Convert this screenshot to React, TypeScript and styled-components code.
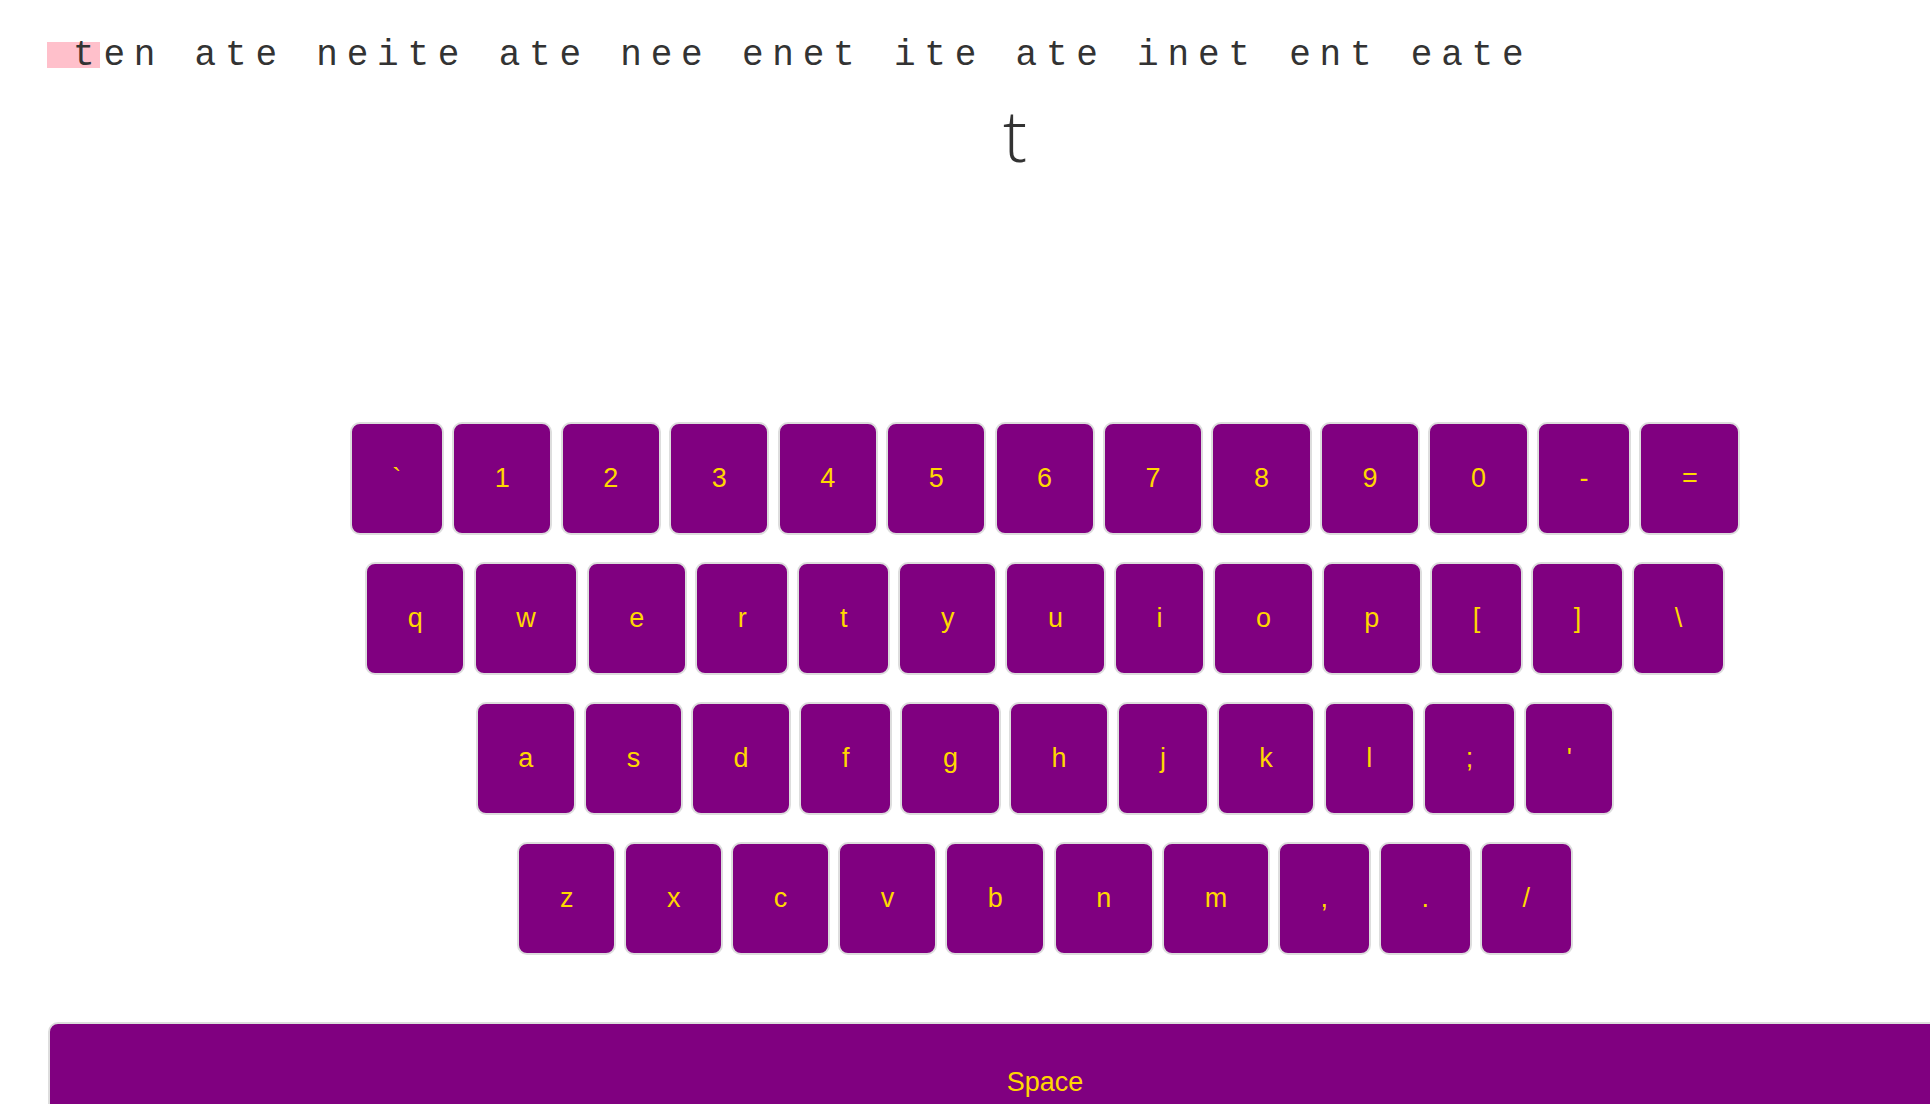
import React from "react";
import styled, { createGlobalStyle } from "styled-components";

const GlobalStyle = createGlobalStyle`
  html, body {
    margin: 0;
    padding: 0;
    overflow: hidden;
    background: #ffffff;
  }
  body {
    font-family: "Liberation Sans", Arial, sans-serif;
  }
`;

const Page = styled.div`
  box-sizing: content-box;
  width: 1994px;
  padding: 36px 0 0 48px;
`;

const TextLine = styled.div`
  position: relative;
  margin-left: 25px;
  font-family: "Liberation Mono", "Courier New", monospace;
  font-size: 36px;
  line-height: 40px;
  letter-spacing: 8.8px;
  color: #333333;
  white-space: pre;
`;

const Cursor = styled.span`
  position: absolute;
  left: -26px;
  top: 6px;
  width: 53px;
  height: 26px;
  background: pink;
`;

const Words = styled.span`
  position: relative;
`;

const BigLetter = styled.div`
  margin-top: 22px;
  padding-right: 60px;
  text-align: center;
  font-family: "Open Sans", "Noto Sans", sans-serif;
  font-weight: 300;
  font-size: 72px;
  line-height: 72px;
  color: #333333;
`;

const Keyboard = styled.div`
  margin-top: 252px;
  display: flex;
  flex-direction: column;
  gap: 27px;
`;

const Row = styled.div`
  display: flex;
  justify-content: center;
  gap: 8.25px;
`;

const Key = styled.div`
  box-sizing: content-box;
  padding: 39px 40.6px;
  border: 2px solid #dddddd;
  border-radius: 10px;
  background: #800080;
  color: #ffd700;
  font-size: 27px;
  line-height: 31px;
  text-align: center;
  white-space: pre;
`;

const SpaceBar = styled.div`
  margin-top: 67px;
  padding: 43px 0 40px;
  border: 2px solid #dddddd;
  border-radius: 10px;
  background: #800080;
  color: #ffd700;
  font-size: 27px;
  line-height: 31px;
  text-align: center;
`;

const rows: string[][] = [
  ["`", "1", "2", "3", "4", "5", "6", "7", "8", "9", "0", "-", "="],
  ["q", "w", "e", "r", "t", "y", "u", "i", "o", "p", "[", "]", "\\"],
  ["a", "s", "d", "f", "g", "h", "j", "k", "l", ";", "'"],
  ["z", "x", "c", "v", "b", "n", "m", ",", ".", "/"],
];

export default function App() {
  return (
    <>
      <GlobalStyle />
      <Page>
        <TextLine>
          <Cursor />
          <Words>ten ate neite ate nee enet ite ate inet ent eate</Words>
        </TextLine>
        <BigLetter>t</BigLetter>
        <Keyboard>
          {rows.map((row, i) => (
            <Row key={i}>
              {row.map((k) => (
                <Key key={k}>{k}</Key>
              ))}
            </Row>
          ))}
        </Keyboard>
        <SpaceBar>Space</SpaceBar>
      </Page>
    </>
  );
}
